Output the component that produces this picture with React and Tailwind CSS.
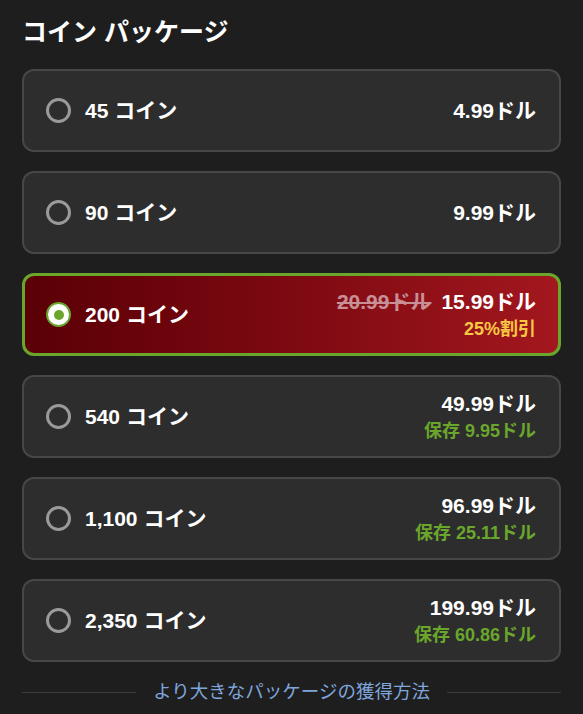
const FONT = { fontFamily: '"Liberation Sans", "Noto Sans CJK JP", sans-serif' };

const PACKS = [
  { coins: '45', price: '4.99' },
  { coins: '90', price: '9.99' },
  { coins: '200', price: '15.99', was: '20.99', off: '25%割引', selected: true },
  { coins: '540', price: '49.99', save: '9.95' },
  { coins: '1,100', price: '96.99', save: '25.11' },
  { coins: '2,350', price: '199.99', save: '60.86' },
];

function Radio({ on }) {
  if (on) {
    return (
      <span className="w-[25px] h-[25px] rounded-full bg-white border-2 border-[#6aa62c] flex items-center justify-center shrink-0">
        <span className="w-[10px] h-[10px] rounded-full bg-[#6aa62c]" />
      </span>
    );
  }
  return <span className="w-[25px] h-[25px] rounded-full border-[3px] border-[#9a9a9a] shrink-0" />;
}

function Pack({ p }) {
  const base = p.selected
    ? 'border-[3px] border-[#6aa62c] bg-gradient-to-r from-[#5a0006] to-[#a3171e] pl-[21px] pr-[22px]'
    : 'border-2 border-[#474747] bg-[#2d2d2d] pl-[22px] pr-[23px]';
  return (
    <div className={`h-[83px] rounded-[12px] flex items-center ${base}`}>
      <Radio on={p.selected} />
      <span className="ml-[14px] text-white text-[21px] font-bold">{p.coins} コイン</span>
      <div className="ml-auto flex flex-col items-end leading-none">
        <div className="flex items-center gap-[10px]">
          {p.was && (
            <span className="text-[21px] font-bold text-[#c98f96] line-through decoration-2">{p.was}ドル</span>
          )}
          <span className="text-white text-[21px] font-bold">{p.price}ドル</span>
        </div>
        {p.off && <span className="mt-[8px] text-[18px] font-bold text-[#f7c843]">{p.off}</span>}
        {p.save && <span className="mt-[8px] text-[18px] font-bold text-[#6aa62c]">保存 {p.save}ドル</span>}
      </div>
    </div>
  );
}

export default function App() {
  return (
    <div className="min-h-[714px] bg-[#1e1e1e] px-[22px] pt-[16px]" style={FONT}>
      <h2 className="text-white text-[25px] font-bold leading-[32px]">コイン パッケージ</h2>
      <div className="mt-[21px] flex flex-col gap-[19px]">
        {PACKS.map((p) => (
          <Pack key={p.coins} p={p} />
        ))}
      </div>
      <div className="mt-[17px] flex items-center gap-[17px]">
        <div className="flex-1 h-px bg-[#3c3c3c]" />
        <span className="text-[#7fa6dc] text-[18.5px] leading-[26px]">より大きなパッケージの獲得方法</span>
        <div className="flex-1 h-px bg-[#3c3c3c]" />
      </div>
    </div>
  );
}
